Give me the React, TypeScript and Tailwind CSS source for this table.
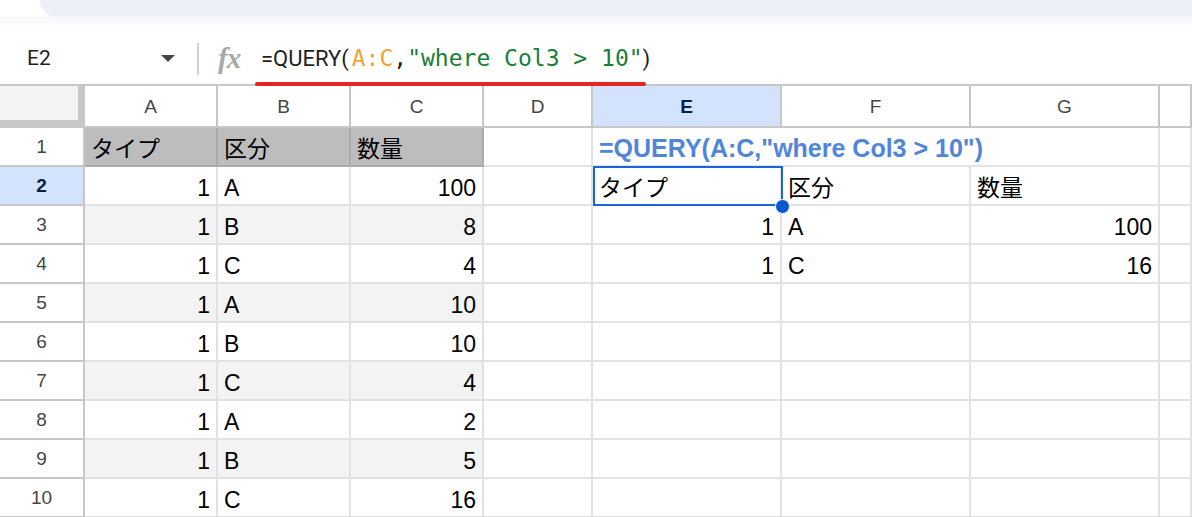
import React from "react";

type Val = string | number | null;

const SANS = "font-['Liberation_Sans','Noto_Sans_CJK_JP',sans-serif]";

const source: Val[][] = [
  ["タイプ", "区分", "数量"],
  [1, "A", 100],
  [1, "B", 8],
  [1, "C", 4],
  [1, "A", 10],
  [1, "B", 10],
  [1, "C", 4],
  [1, "A", 2],
  [1, "B", 5],
  [1, "C", 16],
];

const result: Val[][] = [
  ["タイプ", "区分", "数量"],
  [1, "A", 100],
  [1, "C", 16],
];

const letters = ["A", "B", "C", "D", "E", "F", "G", ""];

function Cell({ value, bg = "", line = "border-[#e2e2e2]" }: { value: Val; bg?: string; line?: string }) {
  const isNum = typeof value === "number";
  return (
    <div
      className={`h-[39px] border-r-2 border-b-2 ${line} ${bg} flex items-end pb-[4px] px-[6px] text-[23px] leading-none text-black whitespace-nowrap overflow-hidden ${
        isNum ? "justify-end" : "justify-start"
      }`}
    >
      {value}
    </div>
  );
}

export default function App() {
  return (
    <div className={`relative w-[1192px] h-[517px] overflow-hidden bg-white ${SANS}`}>
      {/* top strip */}
      <div className="flex h-[17px]">
        <div className="w-[40px]" />
        <div className="flex-1 bg-[#edf1f7] rounded-bl-[22px]" />
      </div>
      <div className="h-[16px] bg-gradient-to-b from-[#f7f8fa] to-white" />

      {/* formula bar */}
      <div className="flex h-[51px] items-center">
        <div className="w-[197px] flex items-center pl-[27px] pr-[22px]">
          <span className="text-[21px] font-['Roboto',sans-serif] text-[#1f1f1f] leading-none">E2</span>
          <span className="ml-auto w-0 h-0 border-l-[7px] border-r-[7px] border-t-[7px] border-l-transparent border-r-transparent border-t-[#444746]" />
        </div>
        <div className="w-[2px] h-[32px] bg-[#d0d0d0]" />
        <span className="ml-[19px] w-[34px] text-[29px] italic font-bold font-['Liberation_Serif',serif] text-[#a8a8a8] leading-none tracking-[-1px]">
          fx
        </span>
        <div className="ml-[9px] flex items-baseline text-[22px] leading-none text-[#1f1f1f]">
          <span className="font-['Roboto',sans-serif]">=QUERY(</span>
          <span className="text-[23px] font-['DejaVu_Sans_Mono',monospace] text-[#f0a437] pl-[3px]">A:C</span>
          <span className="text-[23px] font-['DejaVu_Sans_Mono',monospace]">,</span>
          <span className="text-[23px] font-['DejaVu_Sans_Mono',monospace] text-[#188038]">"where Col3 &gt; 10"</span>
          <span className="font-['Roboto',sans-serif]">)</span>
        </div>
      </div>

      {/* sheet grid */}
      <div className="grid grid-cols-[85px_133px_133px_133px_109px_189px_189px_189px_1fr]">
        {/* header row */}
        <div className="h-[44px] bg-[#f1f3f4] border-t-2 border-r-[7px] border-b-[8px] border-[#c7c7c7]" />
        {letters.map((l, i) => (
          <div
            key={i}
            className={`h-[44px] border-t-2 border-r-2 border-b-2 border-[#c7c7c7] flex items-center justify-center text-[19px] leading-none ${
              l === "E" ? "bg-[#d3e3fd] font-bold text-[#041e49]" : "bg-white text-[#444746]"
            }`}
          >
            {l}
          </div>
        ))}

        {source.map((row, r) => {
          const n = r + 1;
          const headerRow = r === 0;
          const striped = r % 2 === 0 && r > 0 ? "bg-[#f3f3f3]" : "";
          return (
            <React.Fragment key={r}>
              <div
                className={`h-[39px] border-r-2 border-b-2 border-[#c7c7c7] flex items-center justify-center text-[19px] leading-none ${
                  n === 2 ? "bg-[#d3e3fd] font-bold text-[#041e49]" : "text-[#444746]"
                }`}
              >
                {n}
              </div>
              {row.map((v, c) => (
                <Cell
                  key={c}
                  value={v}
                  bg={headerRow ? "bg-[#bdbdbd]" : striped}
                  line={headerRow ? "border-[#ababab]" : "border-[#e2e2e2]"}
                />
              ))}
              <Cell value={null} />

              {r === 0 ? (
                <div className="col-span-3 h-[39px] border-r-2 border-b-2 border-[#e2e2e2] flex items-end pb-[4px] px-[6px] text-[25px] leading-none font-bold text-[#4f86dc] whitespace-nowrap">
                  =QUERY(A:C,"where Col3 &gt; 10")
                </div>
              ) : r <= 3 ? (
                result[r - 1].map((v, c) =>
                  r === 1 && c === 0 ? (
                    <div key={c} className="relative">
                      <Cell value={v} />
                      <div className="absolute left-0 top-[-1px] right-[-1px] bottom-0 border-2 border-[#1a66d8] pointer-events-none" />
                      <div className="absolute right-[-8px] bottom-[-8px] w-[15px] h-[15px] rounded-full bg-[#0b57d0] border border-white z-10" />
                    </div>
                  ) : (
                    <Cell key={c} value={v} />
                  )
                )
              ) : (
                <>
                  <Cell value={null} />
                  <Cell value={null} />
                  <Cell value={null} />
                </>
              )}
              <Cell value={null} />
            </React.Fragment>
          );
        })}
      </div>

      {/* red underline marking the formula */}
      <div className="absolute left-[255px] top-[82px] w-[391px] h-[4px] bg-[#e32525] rounded-full" />
    </div>
  );
}
